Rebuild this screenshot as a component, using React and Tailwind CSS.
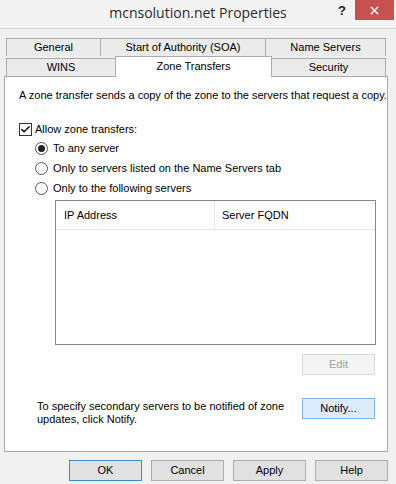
import { Check, X } from "lucide-react";

const ui = { fontFamily: '"Liberation Sans", Arial, sans-serif' };

function Tab({ label, className = "" }) {
  return (
    <div
      className={`flex h-[18px] items-center justify-center border-t border-l border-[#acacac] bg-[#ebebeb] pb-px text-[11px] text-black ${className}`}
    >
      {label}
    </div>
  );
}

function Radio({ checked, label }) {
  return (
    <div className="flex h-[20px] items-center">
      <span className="flex h-[13px] w-[13px] items-center justify-center rounded-full border border-[#555] bg-white">
        {checked && <span className="h-[7px] w-[7px] rounded-full bg-[#222]" />}
      </span>
      <span className="ml-[5px]">{label}</span>
    </div>
  );
}

function Button({ label, kind = "normal", className = "" }) {
  const styles = {
    normal: "border-[#adadad] bg-[#e1e1e1] text-black",
    default: "border-[#3c8ad6] bg-[#e1e1e1] text-black",
    hot: "border-[#7eb4ea] bg-[#dcecfc] text-black",
    disabled: "border-[#d9d9d9] bg-[#f4f4f4] text-[#a0a0a0]",
  };

  return (
    <div
      className={`flex h-[21px] w-[73px] shrink-0 items-center justify-center border text-[11px] ${styles[kind]} ${className}`}
    >
      {label}
    </div>
  );
}

export default function App() {
  return (
    <div className="h-[484px] w-[396px] overflow-hidden bg-[#f0f0f0]" style={ui}>
      {/* title bar */}
      <div className="flex h-[29px] border-b border-[#d8d8d8] bg-[#f3f3f3]">
        <div className="w-[58px]" />
        <div
          className="flex flex-1 items-center justify-center pb-[3px] text-[14px] text-[#2b2b2b]"
          style={{ fontFamily: '"Open Sans", "Noto Sans", sans-serif' }}
        >
          mcnsolution.net Properties
        </div>
        <div className="flex h-[20px] w-[58px] items-start justify-end">
          <span className="mr-[9px] mt-[1px] text-[13px] font-bold text-[#222]">?</span>
          <div className="flex h-[20px] w-[42px] items-center justify-center bg-[#c75050]">
            <X size={13} strokeWidth={2.6} color="#fff" />
          </div>
          <div className="w-[2px]" />
        </div>
      </div>

      {/* tabs */}
      <div className="mt-[9px] px-[6px]">
        <div className="flex">
          <Tab label="General" className="w-[94px]" />
          <Tab label="Start of Authority (SOA)" className="w-[165px]" />
          <Tab label="Name Servers" className="w-[121px] border-r" />
        </div>
        <div className="flex items-end">
          <Tab label="WINS" className="w-[109px]" />
          <div className="relative z-10 -mb-px flex h-[21px] w-[157px] items-center justify-center border-x border-t border-[#acacac] bg-white pb-[2px] text-[11px]">
            Zone Transfers
          </div>
          <Tab label="Security" className="w-[114px] border-l-0 border-r" />
        </div>
      </div>

      {/* panel */}
      <div className="ml-[4px] mr-[8px] flex h-[376px] flex-col border border-[#acacac] bg-white pl-[14px] pr-[12px] pt-[12px] text-[11px] leading-[13px] text-black">
        <div className="whitespace-nowrap">
          A zone transfer sends a copy of the zone to the servers that request a copy.
        </div>

        <div className="mt-[18px] flex h-[18px] items-center">
          <span className="flex h-[13px] w-[13px] items-center justify-center border border-[#333] bg-white">
            <Check size={11} strokeWidth={3.5} color="#111" />
          </span>
          <span className="ml-[3px]">Allow zone transfers:</span>
        </div>

        <div className="ml-[16px] flex flex-col">
          <Radio checked label="To any server" />
          <Radio label="Only to servers listed on the Name Servers tab" />
          <Radio label="Only to the following servers" />
        </div>

        <div className="ml-[36px] mt-[2px] flex h-[145px] w-[321px] flex-col border border-[#828790] bg-white">
          <div className="flex h-[29px] border-b border-[#e5e5e5]">
            <div className="flex w-[159px] items-center border-r border-[#e5e5e5] pl-[8px]">
              IP Address
            </div>
            <div className="flex flex-1 items-center pl-[7px]">Server FQDN</div>
          </div>
        </div>

        <div className="mt-[9px] flex justify-end">
          <Button label="Edit" kind="disabled" />
        </div>

        <div className="mt-[23px] flex items-start justify-between">
          <div className="pl-[18px] pt-[2px] leading-[13px]">
            To specify secondary servers to be notified of zone
            <br />
            updates, click Notify.
          </div>
          <Button label="Notify..." kind="hot" />
        </div>
      </div>

      {/* dialog buttons */}
      <div className="mt-[8px] flex justify-end gap-[9px] pr-[8px]">
        <Button label="OK" kind="default" />
        <Button label="Cancel" />
        <Button label="Apply" />
        <Button label="Help" />
      </div>
    </div>
  );
}
